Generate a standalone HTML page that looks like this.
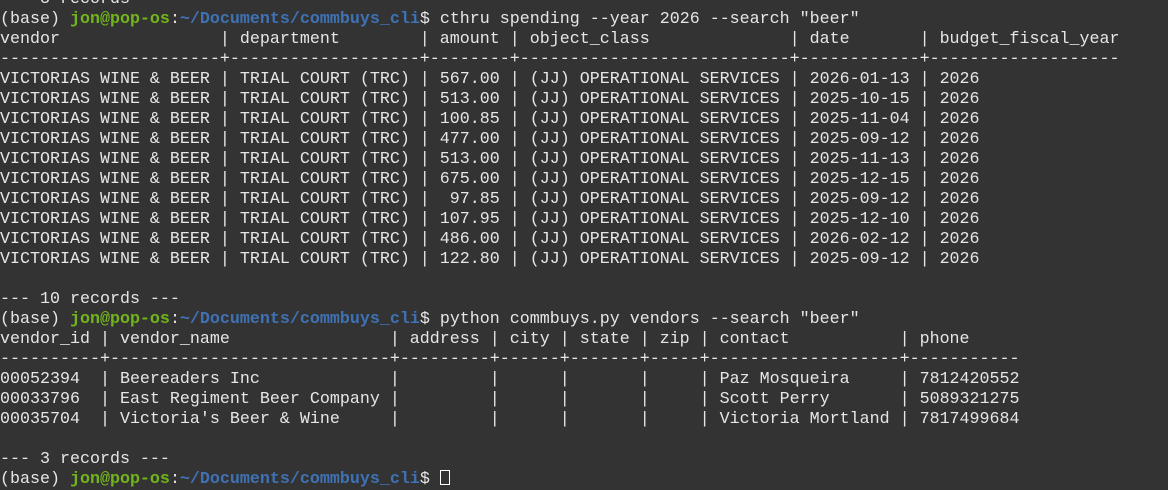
<!DOCTYPE html>
<html><head><style>
html,body{margin:0;padding:0;background:#333333;width:1168px;height:476px;overflow:hidden}
pre{position:absolute;left:0;top:-10px;margin:0;font-family:"Liberation Mono","DejaVu Sans Mono",monospace;font-size:16.67px;line-height:20px;color:#e6e6e6;white-space:pre}
.g{color:#72b51b;font-weight:bold}.b{color:#3f72b5;font-weight:bold}
.cur{display:inline-block;width:10px;height:15px;border:1.5px solid #fff;box-sizing:border-box;vertical-align:-2px}
</style></head><body><pre>--- 3 records ---
(base) <span class="g">jon@pop-os</span>:<span class="b">~/Documents/commbuys_cli</span>$ cthru spending --year 2026 --search "beer"
vendor                | department        | amount | object_class              | date       | budget_fiscal_year
----------------------+-------------------+--------+---------------------------+------------+-------------------
VICTORIAS WINE &amp; BEER | TRIAL COURT (TRC) | 567.00 | (JJ) OPERATIONAL SERVICES | 2026-01-13 | 2026
VICTORIAS WINE &amp; BEER | TRIAL COURT (TRC) | 513.00 | (JJ) OPERATIONAL SERVICES | 2025-10-15 | 2026
VICTORIAS WINE &amp; BEER | TRIAL COURT (TRC) | 100.85 | (JJ) OPERATIONAL SERVICES | 2025-11-04 | 2026
VICTORIAS WINE &amp; BEER | TRIAL COURT (TRC) | 477.00 | (JJ) OPERATIONAL SERVICES | 2025-09-12 | 2026
VICTORIAS WINE &amp; BEER | TRIAL COURT (TRC) | 513.00 | (JJ) OPERATIONAL SERVICES | 2025-11-13 | 2026
VICTORIAS WINE &amp; BEER | TRIAL COURT (TRC) | 675.00 | (JJ) OPERATIONAL SERVICES | 2025-12-15 | 2026
VICTORIAS WINE &amp; BEER | TRIAL COURT (TRC) |  97.85 | (JJ) OPERATIONAL SERVICES | 2025-09-12 | 2026
VICTORIAS WINE &amp; BEER | TRIAL COURT (TRC) | 107.95 | (JJ) OPERATIONAL SERVICES | 2025-12-10 | 2026
VICTORIAS WINE &amp; BEER | TRIAL COURT (TRC) | 486.00 | (JJ) OPERATIONAL SERVICES | 2026-02-12 | 2026
VICTORIAS WINE &amp; BEER | TRIAL COURT (TRC) | 122.80 | (JJ) OPERATIONAL SERVICES | 2025-09-12 | 2026

--- 10 records ---
(base) <span class="g">jon@pop-os</span>:<span class="b">~/Documents/commbuys_cli</span>$ python commbuys.py vendors --search "beer"
vendor_id | vendor_name                | address | city | state | zip | contact           | phone
----------+----------------------------+---------+------+-------+-----+-------------------+-----------
00052394  | Beereaders Inc             |         |      |       |     | Paz Mosqueira     | 7812420552
00033796  | East Regiment Beer Company |         |      |       |     | Scott Perry       | 5089321275
00035704  | Victoria's Beer &amp; Wine     |         |      |       |     | Victoria Mortland | 7817499684

--- 3 records ---
(base) <span class="g">jon@pop-os</span>:<span class="b">~/Documents/commbuys_cli</span>$ <span class="cur"></span></pre></body></html>
